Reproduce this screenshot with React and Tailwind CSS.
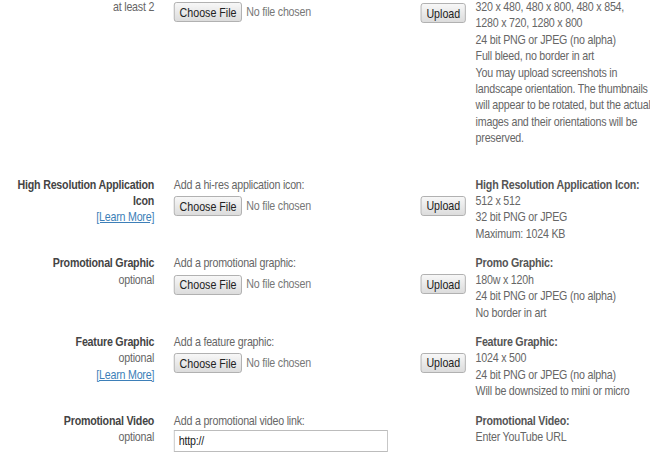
import React from 'react';

const font = { fontFamily: '"Liberation Sans", Arial, sans-serif' };

const btn =
  'h-[20px] whitespace-nowrap rounded-[3px] border border-[#a9a9a9] bg-gradient-to-b from-[#f7f7f7] to-[#dcdcdc] px-[6px] text-[13px] leading-none tracking-normal text-[#222]';

const ChooseFile = () => (
  <div className="flex items-center gap-[5px] whitespace-nowrap">
    <button className={btn}>Choose File</button>
    <span className="text-[13px] text-[#777]">No file chosen</span>
  </div>
);

const UploadButton = () => <button className={btn}>Upload</button>;

const LearnMore = () => (
  <a href="#" className="text-[#3d7fb8] underline">[Learn More]</a>
);

const rows = [
  {
    label: 'High Resolution Application',
    label2: 'Icon',
    learn: true,
    prompt: 'Add a hi-res application icon:',
    title: 'High Resolution Application Icon:',
    specs: ['512 x 512', '32 bit PNG or JPEG', 'Maximum: 1024 KB'],
  },
  {
    label: 'Promotional Graphic',
    sub: 'optional',
    prompt: 'Add a promotional graphic:',
    title: 'Promo Graphic:',
    specs: ['180w x 120h', '24 bit PNG or JPEG (no alpha)', 'No border in art'],
  },
  {
    label: 'Feature Graphic',
    sub: 'optional',
    learn: true,
    prompt: 'Add a feature graphic:',
    title: 'Feature Graphic:',
    specs: ['1024 x 500', '24 bit PNG or JPEG (no alpha)', 'Will be downsized to mini or micro'],
  },
];

const screenshotNotes = [
  '320 x 480, 480 x 800, 480 x 854,',
  '1280 x 720, 1280 x 800',
  '24 bit PNG or JPEG (no alpha)',
  'Full bleed, no border in art',
  'You may upload screenshots in',
  'landscape orientation. The thumbnails',
  'will appear to be rotated, but the actual',
  'images and their orientations will be',
  'preserved.',
];

const App = () => {
  return (
    <div className="h-[459px] w-[650px] overflow-hidden bg-white">
      {/* the form is drawn in condensed proportions */}
      <div
        className="w-[793px] origin-top-left scale-x-[0.82] text-[13px] leading-[16.4px] tracking-[-0.02em] text-[#666]"
        style={font}
      >
        {/* screenshots row, top part scrolled away */}
        <div className="-mt-[1px] flex">
          <div className="w-[188px] shrink-0 text-right">at least 2</div>
          <div className="ml-[24px] w-[301px] shrink-0 pt-[3px]">
            <ChooseFile />
          </div>
          <div className="w-[67px] shrink-0 pt-[4px]">
            <UploadButton />
          </div>
          <div className="flex-1 whitespace-nowrap">
            {screenshotNotes.map((t) => (
              <div key={t}>{t}</div>
            ))}
          </div>
        </div>

        <div className="mt-[30px] flex flex-col gap-[13px]">
          {rows.map((r) => (
            <div key={r.label} className="flex">
              <div className="w-[188px] shrink-0 text-right">
                <div className="font-bold text-[#444]">{r.label}</div>
                {r.label2 && <div className="font-bold text-[#444]">{r.label2}</div>}
                {r.sub && <div>{r.sub}</div>}
                {r.learn && <LearnMore />}
              </div>
              <div className="ml-[24px] w-[301px] shrink-0">
                <div>{r.prompt}</div>
                <div className="mt-[3px]">
                  <ChooseFile />
                </div>
              </div>
              <div className="w-[67px] shrink-0 pt-[19px]">
                <UploadButton />
              </div>
              <div className="flex-1 whitespace-nowrap">
                <div className="font-bold text-[#555]">{r.title}</div>
                {r.specs.map((s) => (
                  <div key={s}>{s}</div>
                ))}
              </div>
            </div>
          ))}

          <div className="flex">
            <div className="w-[188px] shrink-0 text-right">
              <div className="font-bold text-[#444]">Promotional Video</div>
              <div>optional</div>
            </div>
            <div className="ml-[24px] w-[301px] shrink-0">
              <div>Add a promotional video link:</div>
              <input
                type="text"
                defaultValue="http://"
                className="mt-[1px] h-[22px] w-[261px] border border-[#bcbcbc] px-[5px] text-[13px] text-[#222] outline-none"
                style={font}
              />
            </div>
            <div className="w-[67px] shrink-0" />
            <div className="flex-1 whitespace-nowrap">
              <div className="font-bold text-[#555]">Promotional Video:</div>
              <div>Enter YouTube URL</div>
            </div>
          </div>
        </div>
      </div>
    </div>
  );
};

export default App;
